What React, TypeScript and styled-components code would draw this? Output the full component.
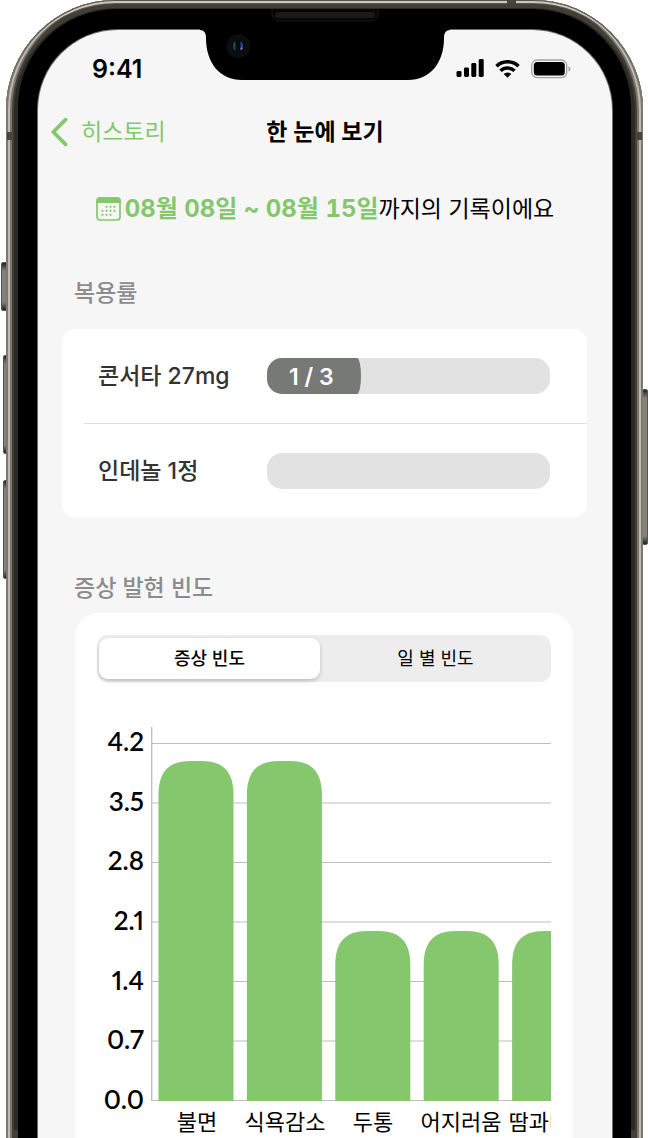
import React, { useState } from "react";
import styled, { createGlobalStyle } from "styled-components";

const GREEN = "#84c76c";
const TEXT_FONT = `Inter, "Noto Sans CJK KR", sans-serif`;

const GlobalStyle = createGlobalStyle`
  * { box-sizing: border-box; }
  body { margin: 0; background: #fff; font-family: ${TEXT_FONT}; color: #000; }
  button { font: inherit; color: inherit; border: 0; padding: 0; background: none; cursor: pointer; }
  h1, h2, p { margin: 0; }
`;

/* ---------- Device ---------- */

const Page = styled.div`
  position: relative;
  display: flex;
  min-height: 100vh;
  padding: 0 5px 0 6px;
  overflow: hidden;
`;

const Rail = styled.div`
  position: relative;
  flex: 1;
  display: flex;
  padding: 9px 12px 0;
  border-radius: 110px 110px 0 0;
  background: #2b2a25;
  box-shadow:
    inset 0 1px 0 #55544e,
    inset 2px 0 0 #7b7971,
    inset -2px 0 0 #7b7971,
    inset 0 3px 0 #cdc6bb,
    inset 4px 0 0 #c0bbb0,
    inset -4px 0 0 #c0bbb0,
    inset 0 4px 0 #5c5a52,
    inset 6px 0 0 #7a776d,
    inset -6px 0 0 #7a776d,
    inset 0 0 0 8px #403f38;
`;

const Bezel = styled.div`
  flex: 1;
  display: flex;
  padding: 21px 19px 0 20px;
  border-radius: 98px 98px 0 0;
  background: #000;
`;

const Screen = styled.main`
  position: relative;
  flex: 1;
  min-width: 0;
  border-radius: 80px 80px 0 0;
  background: #f6f6f6;
  box-shadow: 0 0 0 1px #6d6d6d;
`;

const SideButton = styled.span<{ $side: "left" | "right"; $top: number; $length: number; $depth: number }>`
  position: absolute;
  top: ${(p) => p.$top}px;
  ${(p) => p.$side}: 0;
  width: ${(p) => p.$depth}px;
  height: ${(p) => p.$length}px;
  margin-${(p) => p.$side}: ${(p) => (p.$side === "left" ? 8 - p.$depth : 0)}px;
  border: 1px solid #55544e;
  border-radius: 2px;
  background: linear-gradient(#222, #83827a 8px, #83827a calc(100% - 8px), #222);
`;

const AntennaBand = styled.span<{ $side: "left" | "right" }>`
  position: absolute;
  top: 132px;
  ${(p) => p.$side}: 1px;
  width: 6px;
  height: 8px;
  background: #45443e;
`;

const TopBand = styled(AntennaBand)`
  top: 0;
  right: 127px;
  width: 9px;
  height: 4px;
`;

const Notch = styled.svg`
  position: absolute;
  top: -21px;
  left: 50%;
  margin-left: -125px;
  display: block;
`;

/* ---------- Status and navigation ---------- */

const StatusBar = styled.div`
  display: flex;
  align-items: center;
  justify-content: space-between;
  height: 77px;
  padding: 0 41px 0 54px;
  font-size: 25px;
  font-weight: 600;
`;

const StatusIcons = styled.div`
  display: flex;
  align-items: center;
  gap: 11px;
`;

const NavBar = styled.nav`
  display: grid;
  grid-template-columns: 1fr auto 1fr;
  align-items: center;
  height: 50px;
  padding: 0 12px;
  line-height: 32px;
`;

const BackLink = styled.a`
  display: flex;
  align-items: center;
  gap: 12px;
  color: ${GREEN};
  font-size: 23px;
  text-decoration: none;
`;

const NavTitle = styled.h1`
  font-size: 23px;
  font-weight: 600;
`;

const Period = styled.p`
  display: flex;
  align-items: center;
  justify-content: center;
  gap: 4px;
  height: 104px;
  font-size: 23px;
  line-height: 32px;
  white-space: nowrap;

  strong {
    color: ${GREEN};
    font-size: 24px;
    font-weight: 700;
    font-variant-numeric: tabular-nums;
  }
`;

/* ---------- Sections ---------- */

const SectionTitle = styled.h2`
  padding-left: 36px;
  color: #8c8c8c;
  font-size: 23px;
  line-height: 32px;
  font-weight: 500;
`;

const IntakeSection = styled.section`
  padding-top: 16px;
`;

const IntakeCard = styled.div`
  margin: 20px 25px 0 24px;
  border-radius: 14px;
  background: #fff;
`;

const IntakeRow = styled.div`
  display: flex;
  align-items: center;
  height: 94px;
  padding: 0 37px 0 36px;
  color: #333;
  font-size: 23px;
  line-height: 34px;
  font-weight: 500;
`;

const RowDivider = styled.hr`
  height: 1px;
  margin: 0 0 0 22px;
  border: 0;
  background: #dfdfdf;
`;

const DrugName = styled.span`
  width: 169px;
`;

const Track = styled.div`
  flex: 1;
  height: 36px;
  border-radius: 15px;
  background: #e2e2e2;
  overflow: hidden;
`;

const TrackFill = styled.div`
  height: 100%;
  padding: 2px 0 0 22px;
  border-radius: 0 4px 4px 0 / 0 18px 18px 0;
  background: #777976;
  color: #fff;
  font-weight: 600;
  white-space: nowrap;
`;

const SymptomSection = styled.section`
  padding-top: 54px;
`;

const ChartCard = styled.div`
  margin: 9px 39px 0 37px;
  padding: 22px 22px 0;
  border-radius: 24px 24px 0 0;
  background: #fff;
`;

const Segments = styled.div`
  display: grid;
  grid-template-columns: 22fr 23fr;
  height: 47px;
  padding: 3px 0 3px 2px;
  border-radius: 11px;
  background: #ededed;
`;

const Segment = styled.button<{ $active: boolean }>`
  border-radius: 9px;
  font-size: 18px;
  line-height: 24px;
  font-weight: ${(p) => (p.$active ? 500 : 400)};
  background: ${(p) => (p.$active ? "#fff" : "transparent")};
  box-shadow: ${(p) => (p.$active ? "0 2px 4px rgba(0, 0, 0, 0.2)" : "none")};
`;

const Chart = styled.figure`
  display: grid;
  grid-template-columns: 47px minmax(0, 1fr);
  column-gap: 7px;
  margin: 45px 0 0;
`;

const ValueAxis = styled.div`
  display: flex;
  flex-direction: column;
  justify-content: space-between;
  height: 386px;
  text-align: right;
  font: 600 26px/28px Lato, sans-serif;
  font-variant-numeric: proportional-nums;
  white-space: nowrap;
`;

const Plot = styled.svg`
  display: block;
  width: 100%;
  height: 374px;
`;

const CategoryAxis = styled.div`
  grid-column: 2;
  display: flex;
  margin-top: -12px;
  padding-left: 2px;
  overflow: hidden;
`;

const Category = styled.span`
  flex: 0 0 88px;
  height: 37px;
  text-align: center;
  font-size: 22px;
  line-height: 42px;
  white-space: nowrap;
`;

/* ---------- Data ---------- */

const drugs = [
  { name: "콘서타 27mg", taken: 1, total: 3 },
  { name: "인데놀 1정", taken: 0, total: 3 },
];

const symptoms = [
  { name: "불면", count: 4 },
  { name: "식욕감소", count: 4 },
  { name: "두통", count: 2 },
  { name: "어지러움", count: 2 },
  { name: "땀과다증", count: 2 },
];

const ticks = [4.2, 3.5, 2.8, 2.1, 1.4, 0.7, 0];
const BASELINE = 373;
const UNIT = 85;

const barPath = (x: number, top: number) =>
  `M${x} ${BASELINE + 1}V${top + 34}C${x} ${top + 11} ${x + 10} ${top} ${x + 32} ${top}` +
  `H${x + 43}C${x + 65} ${top} ${x + 75} ${top + 11} ${x + 75} ${top + 34}V${BASELINE + 1}Z`;

/* ---------- Icons ---------- */

const SignalIcon = () => (
  <svg width="28" height="19" viewBox="0 0 28 19" aria-hidden="true">
    <rect x="0.5" y="12" width="5" height="6" rx="1.4" />
    <rect x="8" y="8.5" width="5" height="9.5" rx="1.4" />
    <rect x="15.3" y="4" width="5" height="14" rx="1.4" />
    <rect x="22.7" y="0" width="5" height="18" rx="1.4" />
  </svg>
);

const WifiIcon = () => (
  <svg width="25" height="18" viewBox="0 0 25 18" aria-hidden="true">
    <g fill="none" stroke="#000" strokeWidth="3.5">
      <path d="M1.5 6.2a15.8 15.8 0 0 1 22 0" />
      <path d="M5.500 10.800a10 10 0 0 1 14 0" />
    </g>
    <path d="M12.500 17.700 8.700 13.900a5.500 5.500 0 0 1 7.600 0Z" />
  </svg>
);

const BatteryIcon = () => (
  <svg width="40" height="20" viewBox="0 0 40 20" aria-hidden="true">
    <rect x="0.7" y="1" width="35" height="17.6" rx="5.5" fill="none" stroke="#a3a3a3" strokeWidth="1.3" />
    <rect x="2.8" y="3" width="31" height="13.6" rx="3.5" />
    <path d="M37.500 7.200v5.500q2-.9 2-2.750t-2-2.750Z" fill="#a3a3a3" />
  </svg>
);

const ChevronIcon = () => (
  <svg width="19" height="30" viewBox="0 0 19 30" aria-hidden="true">
    <path d="M15.600 2.700 3.300 15 15.600 27.300" fill="none" stroke={GREEN} strokeWidth="3.8" strokeLinecap="round" strokeLinejoin="round" />
  </svg>
);

const calendarDots = [
  [10.5, 9.8], [14.5, 9.8], [18.5, 9.8],
  [6.5, 13.8], [10.5, 13.8], [14.5, 13.8], [18.5, 13.8],
  [6.5, 17.8], [10.5, 17.8], [14.5, 17.8],
];

const CalendarIcon = () => (
  <svg width="25" height="24" viewBox="0 0 25 24" aria-hidden="true">
    <rect x="1" y="1" width="23" height="22" rx="3" fill="none" stroke={GREEN} strokeWidth="1.7" />
    <path d="M.3 6V3.500Q.3.300 3.500.300h18q3.200 0 3.200 3.200V6Z" fill={GREEN} />
    {calendarDots.map(([x, y]) => (
      <circle key={`${x}-${y}`} cx={x} cy={y} r="1.1" fill={GREEN} />
    ))}
  </svg>
);

const NotchDrawing = () => (
  <Notch width="250" height="72" viewBox="0 0 250 72" aria-hidden="true">
    <path d="M0 20V21Q6 21 6 29C6 54 20 71 42 71H208C230 71 244 54 244 29Q244 21 250 21V20Z" />
    <path d="M72 0v4q0 8 8 8h90q8 0 8-8V0" fill="#060606" stroke="#191919" />
    <rect x="75" y="3" width="100" height="6" rx="3" fill="#1a1a1a" />
    <circle cx="38.5" cy="37" r="12" fill="#0d0d0f" />
    <circle cx="38.5" cy="37" r="6.5" fill="#050a12" />
    <path d="M35.500 32a6 6 0 0 0 0 10Z" fill="#1d4c48" />
    <path d="M40.500 32a6 6 0 0 1 0 10Z" fill="#24418f" />
    <circle cx="41.5" cy="39.5" r="1" fill="#9a94c8" />
  </Notch>
);

/* ---------- Screen ---------- */

export default function App() {
  const [view, setView] = useState(0);

  return (
    <>
      <GlobalStyle />
      <Page>
        <SideButton $side="left" $top={262} $length={49} $depth={7} />
        <SideButton $side="left" $top={355} $length={99} $depth={5} />
        <SideButton $side="left" $top={480} $length={99} $depth={5} />
        <SideButton $side="right" $top={389} $length={156} $depth={6} />
        <Rail>
          <AntennaBand $side="left" />
          <AntennaBand $side="right" />
          <TopBand $side="right" />
          <Bezel>
            <Screen>
              <NotchDrawing />
              <StatusBar>
                <span>9:41</span>
                <StatusIcons>
                  <SignalIcon />
                  <WifiIcon />
                  <BatteryIcon />
                </StatusIcons>
              </StatusBar>

              <NavBar>
                <BackLink href="#history">
                  <ChevronIcon />
                  히스토리
                </BackLink>
                <NavTitle>한 눈에 보기</NavTitle>
              </NavBar>

              <Period>
                <CalendarIcon />
                <span>
                  <strong>08월 08일 ~ 08월 15일</strong>까지의 기록이에요
                </span>
              </Period>

              <IntakeSection>
                <SectionTitle>복용률</SectionTitle>
                <IntakeCard>
                  {drugs.map((drug, i) => (
                    <React.Fragment key={drug.name}>
                      {i > 0 && <RowDivider />}
                      <IntakeRow>
                        <DrugName>{drug.name}</DrugName>
                        <Track>
                          {drug.taken > 0 && (
                            <TrackFill style={{ width: `${(drug.taken / drug.total) * 100}%` }}>
                              {drug.taken} / {drug.total}
                            </TrackFill>
                          )}
                        </Track>
                      </IntakeRow>
                    </React.Fragment>
                  ))}
                </IntakeCard>
              </IntakeSection>

              <SymptomSection>
                <SectionTitle>증상 발현 빈도</SectionTitle>
                <ChartCard>
                  <Segments>
                    {["증상 빈도", "일 별 빈도"].map((label, i) => (
                      <Segment key={label} type="button" $active={view === i} aria-pressed={view === i} onClick={() => setView(i)}>
                        {label}
                      </Segment>
                    ))}
                  </Segments>
                  <Chart>
                    <ValueAxis>
                      {ticks.map((tick) => (
                        <span key={tick}>{tick.toFixed(1)}</span>
                      ))}
                    </ValueAxis>
                    <Plot role="img" aria-label="증상 빈도">
                      {ticks.map((tick) => {
                        const y = BASELINE + 0.5 - tick * UNIT;
                        return <line key={tick} x1="0" x2="100%" y1={y} y2={y} stroke="#bdbdbd" strokeWidth="1.2" />;
                      })}
                      <line x1="0.7" x2="0.7" y1="0" y2="374" stroke="#bdbdbd" strokeWidth="1.3" />
                      {symptoms.map((s, i) => (
                        <path key={s.name} d={barPath(7.5 + i * 88.4, BASELINE + 1 - s.count * UNIT)} fill={GREEN} />
                      ))}
                    </Plot>
                    <CategoryAxis>
                      {symptoms.map((s) => (
                        <Category key={s.name}>{s.name}</Category>
                      ))}
                    </CategoryAxis>
                  </Chart>
                </ChartCard>
              </SymptomSection>
            </Screen>
          </Bezel>
        </Rail>
      </Page>
    </>
  );
}
